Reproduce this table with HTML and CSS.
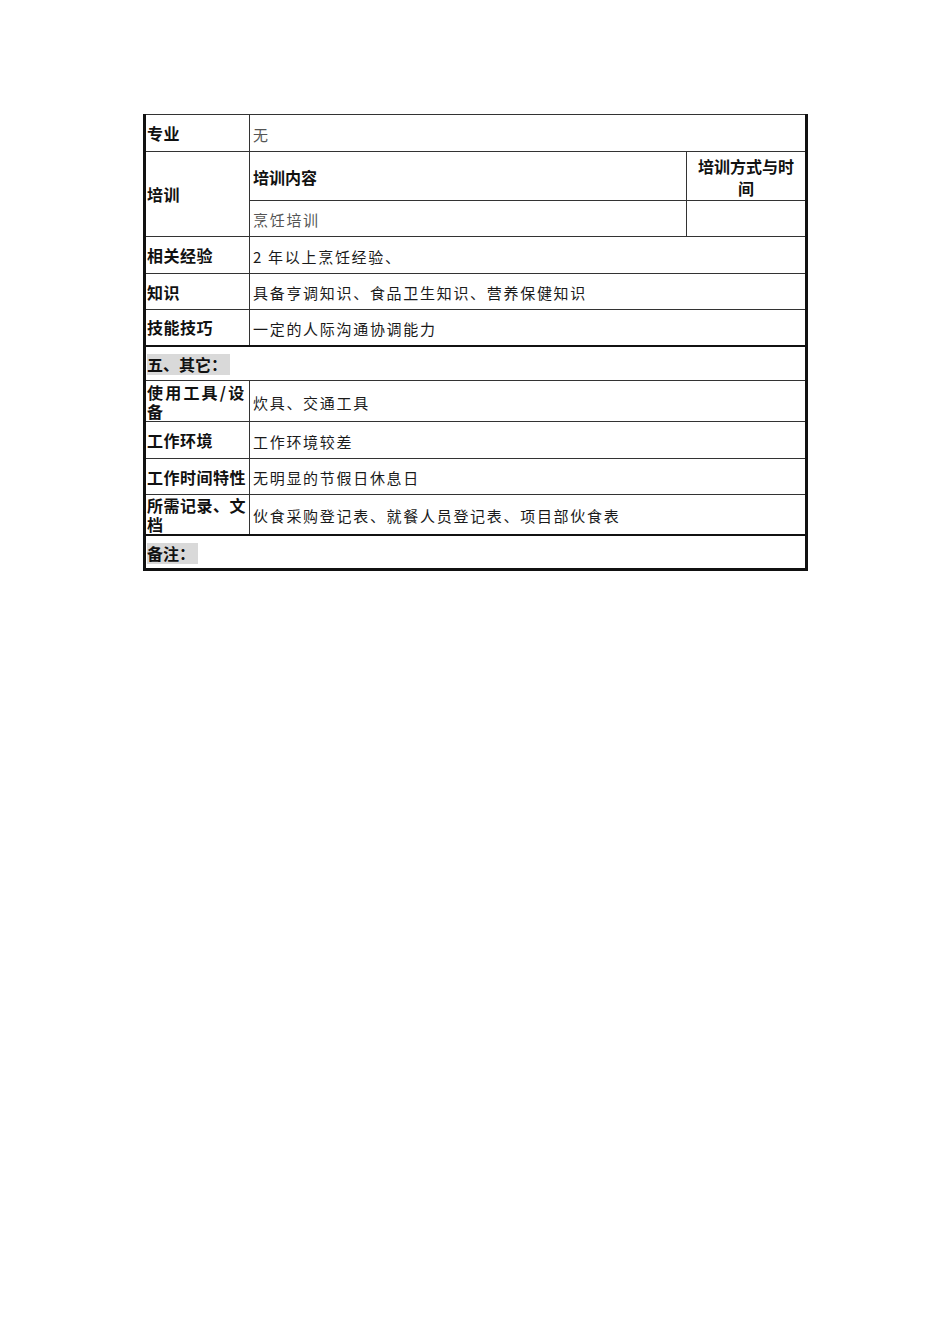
FILE: index.html
```html
<!DOCTYPE html>
<html lang="zh">
<head>
<meta charset="utf-8">
<title>岗位说明</title>
<link rel="stylesheet" href="styles.css">
</head>
<body>
<table class="job">
  <colgroup>
    <col class="c1">
    <col class="c2">
    <col class="c3">
  </colgroup>
  <tbody>
    <tr class="r37">
      <th class="lbl">专业</th>
      <td class="val grey" colspan="2">无</td>
    </tr>
    <tr class="r49">
      <th class="lbl" rowspan="2">培训</th>
      <td class="sub">培训内容</td>
      <td class="sub center">培训方式与时间</td>
    </tr>
    <tr class="r36">
      <td class="val grey">烹饪培训</td>
      <td class="val"></td>
    </tr>
    <tr class="r37">
      <th class="lbl">相关经验</th>
      <td class="val" colspan="2">2 年以上烹饪经验、</td>
    </tr>
    <tr class="r36">
      <th class="lbl">知识</th>
      <td class="val" colspan="2">具备亨调知识、食品卫生知识、营养保健知识</td>
    </tr>
    <tr class="r36 thick">
      <th class="lbl">技能技巧</th>
      <td class="val" colspan="2">一定的人际沟通协调能力</td>
    </tr>
    <tr class="r35">
      <td class="section" colspan="3"><span class="hl">五、其它：</span></td>
    </tr>
    <tr class="r41">
      <th class="lbl wide">使用工具/设备</th>
      <td class="val" colspan="2">炊具、交通工具</td>
    </tr>
    <tr class="r37">
      <th class="lbl">工作环境</th>
      <td class="val" colspan="2">工作环境较差</td>
    </tr>
    <tr class="r36">
      <th class="lbl">工作时间特性</th>
      <td class="val" colspan="2">无明显的节假日休息日</td>
    </tr>
    <tr class="r38 thick">
      <th class="lbl">所需记录、文档</th>
      <td class="val" colspan="2">伙食采购登记表、就餐人员登记表、项目部伙食表</td>
    </tr>
    <tr class="r34">
      <td class="section" colspan="3"><span class="hl">备注：</span></td>
    </tr>
  </tbody>
</table>
</body>
</html>
```

FILE: styles.css
```css
html, body {
  margin: 0;
  padding: 0;
  background: #ffffff;
}

body {
  font-family: "Noto Sans CJK SC", "Liberation Sans", sans-serif;
  color: #111;
}

.job {
  border-collapse: collapse;
  table-layout: fixed;
  width: 665px;
  margin: 114px 0 0 143px;
  border-top: 1px solid #222;
  border-left: 3px solid #111;
  border-right: 3px solid #111;
  border-bottom: 3px solid #111;
}

.c1 { width: 105px; }
.c2 { width: 437px; }
.c3 { width: 120px; }

.job th,
.job td {
  border: 1px solid #333;
  padding: 0;
  vertical-align: middle;
}

.job tr.thick > th,
.job tr.thick > td {
  border-bottom: 2px solid #111;
}

.r34 { height: 34px; }
.r35 { height: 35px; }
.r36 { height: 36px; }
.r37 { height: 37px; }
.r38 { height: 38px; }
.r41 { height: 41px; }
.r49 { height: 49px; }

.job .lbl {
  text-align: left;
  font-weight: 700;
  font-size: 16px;
  line-height: 19px;
  letter-spacing: 0.5px;
  padding: 1px 0 0 1px;
  color: #111;
}

.job .lbl.wide {
  letter-spacing: 2.2px;
}

.job .sub {
  font-weight: 700;
  font-size: 16px;
  line-height: 22px;
  padding: 1px 4px 0 3px;
  color: #111;
}

.job .sub.center {
  text-align: center;
  padding: 1px 8px 0 8px;
}

.job .val {
  font-size: 15px;
  line-height: 18px;
  letter-spacing: 1.7px;
  padding: 3px 3px 0 3px;
  color: #1a1a1a;
}

.job .val.grey {
  color: #555;
}

.job .section {
  padding: 2px 0 0 1px;
}

.hl {
  display: inline-block;
  background: #d9d9d9;
  font-weight: 700;
  font-size: 16px;
  line-height: 21px;
  padding: 0 3px 0 0;
  color: #111;
}
```
